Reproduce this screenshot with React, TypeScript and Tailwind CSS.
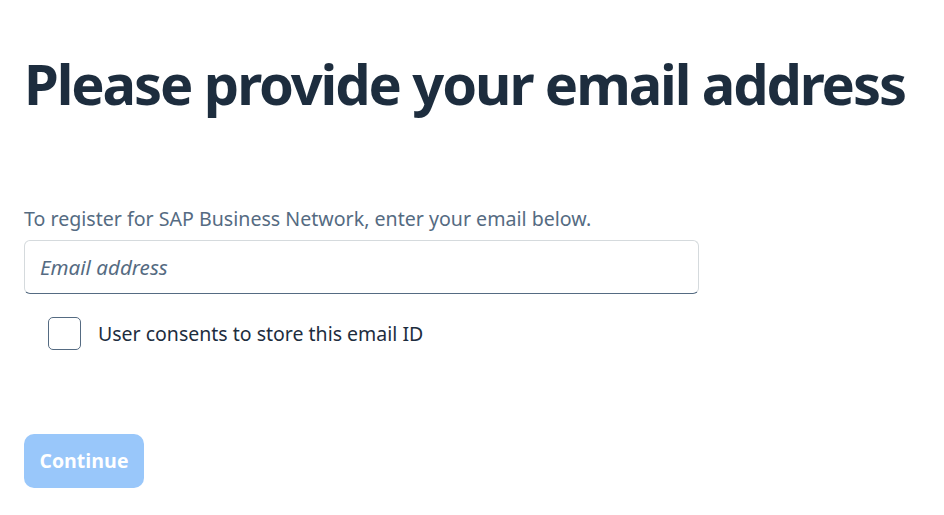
import { useState } from "react";

export default function App() {
    const [email, setEmail] = useState("");
    const [consent, setConsent] = useState(false);

    return (
        <div className="min-h-screen bg-white px-6 pt-[48px] font-['Noto_Sans',sans-serif] text-[#1d2d3e]">
            <h1 className="whitespace-nowrap text-[56px] font-bold leading-[70px] tracking-[-2.1px]">
                Please provide your email address
            </h1>

            <p className="mt-[89px] text-[19.6px] leading-[24px] text-[#556b82]">
                To register for SAP Business Network, enter your email below.
            </p>

            <input
                type="email"
                value={email}
                onChange={(e) => setEmail(e.target.value)}
                placeholder="Email address"
                className="mt-[9px] block h-[54px] w-[675px] rounded-[6px] border border-[#d5dadd] border-b-[#556b82] px-[15px] text-[20.6px] text-[#1d2d3e] outline-none placeholder:italic placeholder:text-[#556b82]"
            />

            <label className="mt-[23px] ml-6 flex items-center gap-[17px] text-[19.5px] leading-[24px]">
                <input
                    type="checkbox"
                    checked={consent}
                    onChange={(e) => setConsent(e.target.checked)}
                    className="h-[33px] w-[33px] appearance-none rounded-[5px] border border-[#556b82] bg-white"
                />
                <span>User consents to store this email ID</span>
            </label>

            <button
                type="button"
                disabled={!email || !consent}
                className="mt-[84px] h-[54px] w-[120px] rounded-[10px] bg-[#99c7fa] font-['Open_Sans',sans-serif] text-[19.5px] font-bold text-white"
            >
                Continue
            </button>
        </div>
    );
}
